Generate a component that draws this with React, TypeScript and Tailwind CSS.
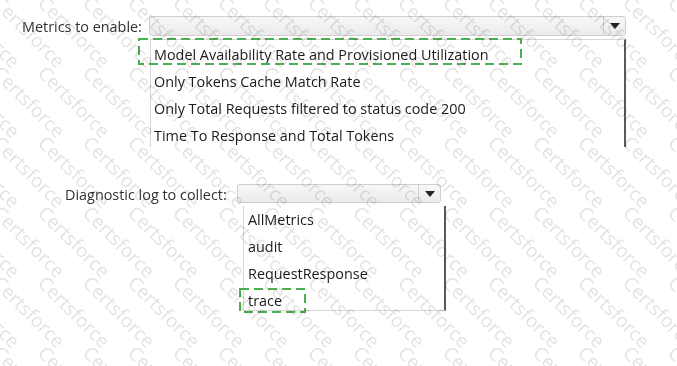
import type { ReactNode } from "react";

const metrics = [
  "Model Availability Rate and Provisioned Utilization",
  "Only Tokens Cache Match Rate",
  "Only Total Requests filtered to status code 200",
  "Time To Response and Total Tokens",
];

const logs = ["AllMetrics", "audit", "RequestResponse", "trace"];

// Dashed green selection marker drawn over an answer row.
function DashedBox({ className }: { className: string }) {
  return (
    <svg className={`pointer-events-none absolute ${className}`}>
      <rect
        x="1"
        y="1"
        fill="none"
        stroke="#4caf50"
        strokeWidth="2"
        strokeDasharray="9 5"
        style={{ width: "calc(100% - 2px)", height: "calc(100% - 2px)" }}
      />
    </svg>
  );
}

function Dropdown({ className }: { className: string }) {
  return (
    <div
      className={`flex items-stretch rounded-[3px] border border-[#cfcfcf] bg-gradient-to-b from-[#f7f7f7] to-[#ebebeb] ${className}`}
    >
      <div className="flex-1" />
      <div className="flex w-[22px] items-center justify-center border-l border-[#cfcfcf]">
        <svg width="10" height="6" viewBox="0 0 10 6">
          <path d="M0 0H10L5 6Z" fill="#222" />
        </svg>
      </div>
    </div>
  );
}

function Row({ children }: { children: ReactNode }) {
  return <div className="flex h-[27px] items-center whitespace-nowrap">{children}</div>;
}

// Faint diagonal "Certsforce" stamp tiled across the screenshot.
function Watermark() {
  const marks: { x: number; y: number }[] = [];
  for (let r = 0; r < 7; r++) {
    for (let c = -2; c < 16; c++) {
      marks.push({ x: 3 + c * 45, y: -77 + r * 70 });
    }
  }
  return (
    <div className="pointer-events-none absolute inset-0 overflow-hidden mix-blend-multiply">
      {marks.map((m, i) => (
        <span
          key={i}
          className="absolute origin-top-left rotate-45 text-[19px] leading-none text-[#e3e3e3]"
          style={{ left: m.x, top: m.y }}
        >
          Certsforce
        </span>
      ))}
    </div>
  );
}

export default function App() {
  return (
    <div className="relative h-[366px] w-[677px] overflow-hidden bg-white font-['Open_Sans',sans-serif] text-[14.4px] text-[#1b1b1b]">
      <div className="flex pt-[16px]">
        <div className="w-[149px] pl-[22px] leading-[21px] text-[#333]">Metrics to enable:</div>
        <div className="w-[477px]">
          <Dropdown className="h-[20px]" />
          <div className="relative mt-[3px] ml-px h-[108px] border-t border-l border-[#d6d6d6] border-r-2 border-r-[#5a5a5a] pl-[3px]">
            <div className="pt-px">
              {metrics.map((m) => (
                <Row key={m}>{m}</Row>
              ))}
            </div>
            <DashedBox className="-left-[13px] -top-[2px] h-[27px] w-[384px]" />
          </div>
        </div>
      </div>

      <div className="mt-[37px] flex">
        <div className="w-[237px] pl-[65px] leading-[21px] text-[#333]">Diagnostic log to collect:</div>
        <div className="w-[209px]">
          <Dropdown className="mr-[5px] h-[19px]" />
          <div className="relative mt-[3px] ml-[6px] h-[105px] border-b border-l border-[#d6d6d6] border-r-2 border-r-[#5a5a5a] pl-[4px]">
            {logs.map((l) => (
              <Row key={l}>{l}</Row>
            ))}
            <DashedBox className="-left-[5px] top-[82px] h-[25px] w-[67px]" />
          </div>
        </div>
      </div>

      <Watermark />
    </div>
  );
}
